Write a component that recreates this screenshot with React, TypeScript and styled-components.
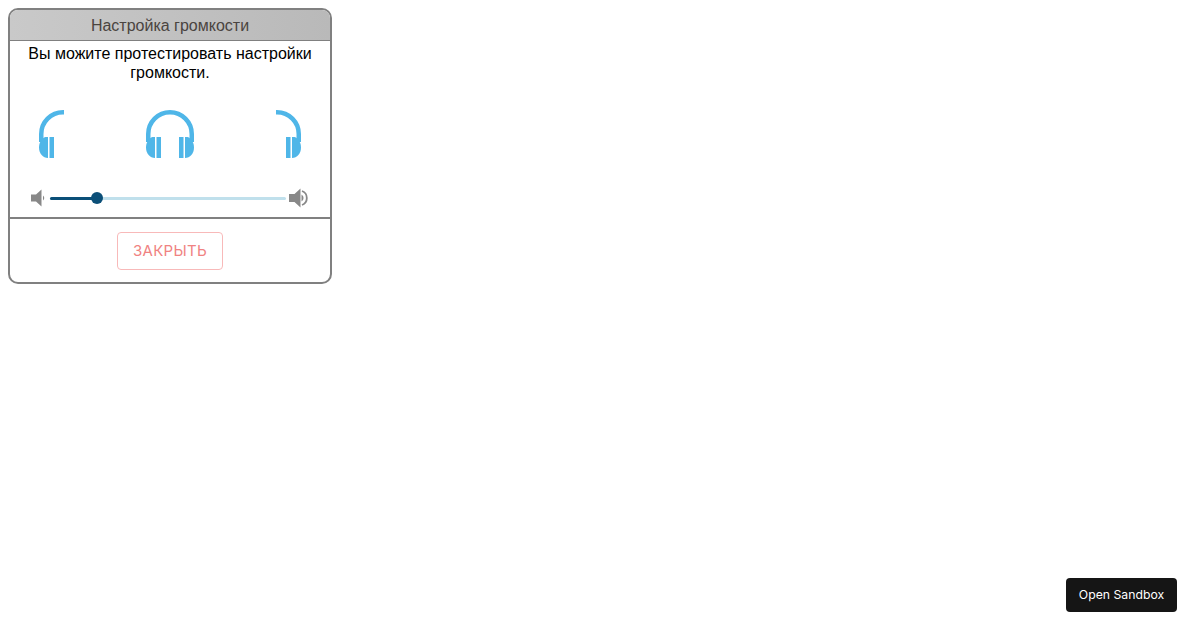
import React from 'react';
import styled, { createGlobalStyle } from 'styled-components';

const Global = createGlobalStyle`
  html, body { background: #fff; }
  body { margin: 8px; font-family: "Liberation Sans", Arial, sans-serif; }
`;

const Panel = styled.section`
  box-sizing: border-box;
  width: 324px;
  height: 276px;
  border: 2px solid #808080;
  border-radius: 10px;
  overflow: hidden;
  display: flex;
  flex-direction: column;
`;

const Header = styled.header`
  box-sizing: border-box;
  height: 31px;
  padding-top: 1px;
  flex: none;
  display: flex;
  align-items: center;
  justify-content: center;
  background: linear-gradient(to right, #c9c9c9, #b9b9b9);
  border-bottom: 1px solid #808080;
  color: #4a4440;
  font-size: 16px;
`;

const Intro = styled.p`
  margin: 3px 0 0;
  padding: 0 10px;
  height: 37px;
  text-align: center;
  font-size: 16px;
  line-height: 19px;
  color: #000;
`;

const Phones = styled.div`
  display: flex;
  justify-content: space-between;
  margin-top: 29px;
  padding: 0 29px;
`;

const Slot = styled.div`
  width: 25px;
  height: 48px;
  display: flex;
  justify-content: center;
`;

const Volume = styled.div`
  display: flex;
  align-items: center;
  margin-top: 30px;
  padding-left: 21px;
  height: 20px;
`;

const Track = styled.div`
  position: relative;
  width: 236px;
  height: 3px;
  margin: 0 3px 0 4px;
  background: #c0e0ec;
  border-radius: 2px;
`;

const Fill = styled.div`
  height: 100%;
  background: #0b4f78;
  border-radius: 2px;
`;

const Thumb = styled.div`
  position: absolute;
  top: 50%;
  width: 12px;
  height: 12px;
  border-radius: 50%;
  background: #0b4f78;
  transform: translate(-50%, -50%);
`;

const Footer = styled.footer`
  margin-top: 9px;
  flex: 1;
  display: flex;
  align-items: center;
  justify-content: center;
  border-top: 2px solid #808080;
`;

const CloseButton = styled.button`
  box-sizing: border-box;
  width: 106px;
  height: 38px;
  margin-top: 1px;
  background: #fff;
  border: 1px solid #f8b9b9;
  border-radius: 4px;
  color: #f08282;
  font-family: Inter, "Liberation Sans", sans-serif;
  font-size: 15px;
  letter-spacing: 0.3px;
  padding: 0 0 2px;
`;

const SandboxButton = styled.button`
  position: fixed;
  right: 23px;
  bottom: 18px;
  box-sizing: border-box;
  width: 111px;
  height: 34px;
  padding: 0 0 2px;
  border: 0;
  border-radius: 4px;
  background: #151515;
  color: #fff;
  font-family: Inter, "Liberation Sans", sans-serif;
  font-size: 12.25px;
`;

const BLUE = '#4fb6e8';

const Band = ({ d }: { d: string }) => (
  <path d={d} fill="none" stroke={BLUE} strokeWidth={4.5} />
);

const LeftCup = () => (
  <>
    <path d="M9 27H6.500C2.500 28 0 33 0 37.500C0 43.500 4 48 9 48z" fill={BLUE} />
    <rect x="10.500" y="27" width="4.500" height="21" fill={BLUE} />
  </>
);

const RightCup = () => (
  <>
    <rect x="33" y="27" width="4.500" height="21" fill={BLUE} />
    <path d="M39 27h2.500C45.500 28 48 33 48 37.500C48 43.500 44 48 39 48z" fill={BLUE} />
  </>
);

const PhonesBoth = () => (
  <svg width="48" height="48" viewBox="0 0 48 48" style={{ flex: 'none' }}>
    <Band d="M2.250 32V24a21.750 21.750 0 0 1 43.500 0v8" />
    <LeftCup />
    <RightCup />
  </svg>
);

const PhonesLeft = () => (
  <svg width="25" height="48" viewBox="0 0 25 48" style={{ flex: 'none' }}>
    <Band d="M2.250 32V24A21.750 21.750 0 0 1 24 2.250H25" />
    <LeftCup />
  </svg>
);

const PhonesRight = () => (
  <svg width="25" height="48" viewBox="23 0 25 48" style={{ flex: 'none' }}>
    <Band d="M23 2.250H24A21.750 21.750 0 0 1 45.750 24v8" />
    <RightCup />
  </svg>
);

const SpeakerLow = () => (
  <svg width="15" height="18" viewBox="0 0 15 18" style={{ flex: 'none' }}>
    <path d="M0 5.500h5l5.500-5v17L5 12.500H0z" fill="#888" />
    <path d="M12 6.500a3.500 3.500 0 0 1 0 5z" fill="#888" />
  </svg>
);

const SpeakerHigh = () => (
  <svg width="19" height="20" viewBox="0 0 19 20" style={{ flex: 'none' }}>
    <path d="M0 6h5.500l6-5.500v19L5.500 14H0z" fill="#888" />
    <path d="M12.500 6.500a4 4 0 0 1 0 7z" fill="#888" />
    <path d="M13 3A7.500 7.500 0 0 1 13 17" fill="none" stroke="#888" strokeWidth={1.8} />
  </svg>
);

export default function App() {
  const level = 20;
  return (
    <>
      <Global />
      <Panel>
        <Header>Настройка громкости</Header>
        <Intro>Вы можите протестировать настройки громкости.</Intro>
        <Phones>
          <Slot><PhonesLeft /></Slot>
          <Slot><PhonesBoth /></Slot>
          <Slot><PhonesRight /></Slot>
        </Phones>
        <Volume>
          <SpeakerLow />
          <Track>
            <Fill style={{ width: `${level}%` }} />
            <Thumb style={{ left: `${level}%` }} />
          </Track>
          <SpeakerHigh />
        </Volume>
        <Footer>
          <CloseButton>ЗАКРЫТЬ</CloseButton>
        </Footer>
      </Panel>
      <SandboxButton>Open Sandbox</SandboxButton>
    </>
  );
}
